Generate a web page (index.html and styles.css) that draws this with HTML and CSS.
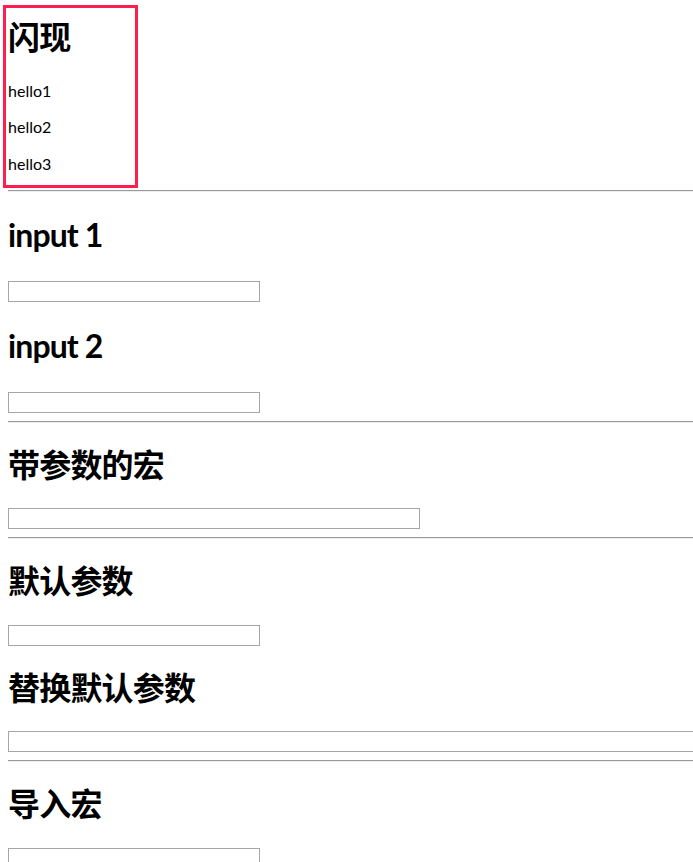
FILE: index.html
```html
<!DOCTYPE html>
<html lang="zh-CN">
<head>
<meta charset="utf-8">
<title>宏</title>
<link rel="stylesheet" href="styles.css">
</head>
<body>
  <div class="flash">
    <h1 class="title">闪现</h1>
    <p class="line">hello1</p>
    <p class="line">hello2</p>
    <p class="line">hello3</p>
  </div>
  <main class="content">
    <hr class="rule first">
    <h1 class="title latin">input 1</h1>
    <input class="field" type="text">
    <h1 class="title latin">input 2</h1>
    <input class="field" type="text">
    <hr class="rule">
    <h1 class="title">带参数的宏</h1>
    <input class="field wide" type="text">
    <hr class="rule">
    <h1 class="title">默认参数</h1>
    <input class="field" type="text">
    <h1 class="title">替换默认参数</h1>
    <input class="field full" type="text">
    <hr class="rule">
    <h1 class="title">导入宏</h1>
    <input class="field" type="text">
  </main>
</body>
</html>
```
FILE: styles.css
```css
html {
  overflow: hidden;
  background: #fff;
}

body {
  margin: 0;
  padding: 5px 0 8px 3px;
  font-family: Lato, "Noto Sans CJK SC", sans-serif;
  font-size: 16px;
  color: #000;
}

.flash {
  width: 135px;
  box-sizing: border-box;
  border: 3px solid #ff1f4f;
  padding: 0 0 0 2px;
}

.content {
  margin: 0 0 0 5px;
}

.title {
  font-size: 32px;
  font-weight: bold;
  letter-spacing: -0.8px;
  line-height: 42px;
  margin: 21px 0 22.5px;
}

.flash .title {
  margin: 8px 0 22.6px;
}

.title.latin {
  font-weight: bold;
  letter-spacing: -0.9px;
  line-height: 46.5px;
  margin: 20.5px 0 22.5px;
}

.line {
  margin: 16px 0;
  line-height: 20.5px;
}

.flash .line:last-child {
  margin-bottom: 10.9px;
}

.rule {
  height: 0;
  margin: 8px 0;
  border: 0;
  border-top: 1px solid #9a9a9a;
  border-bottom: 1px solid #eeeeee;
}

.rule.first {
  margin-top: 2px;
}

.field {
  display: block;
  box-sizing: border-box;
  width: 252px;
  height: 21px;
  margin: 0;
  padding: 0;
  border: 1px solid #a6a6a6;
  background: #fff;
  font: 13px Lato, sans-serif;
}

.field.wide {
  width: 412px;
}

.field.full {
  width: 100%;
  border-right: 0;
}
```
